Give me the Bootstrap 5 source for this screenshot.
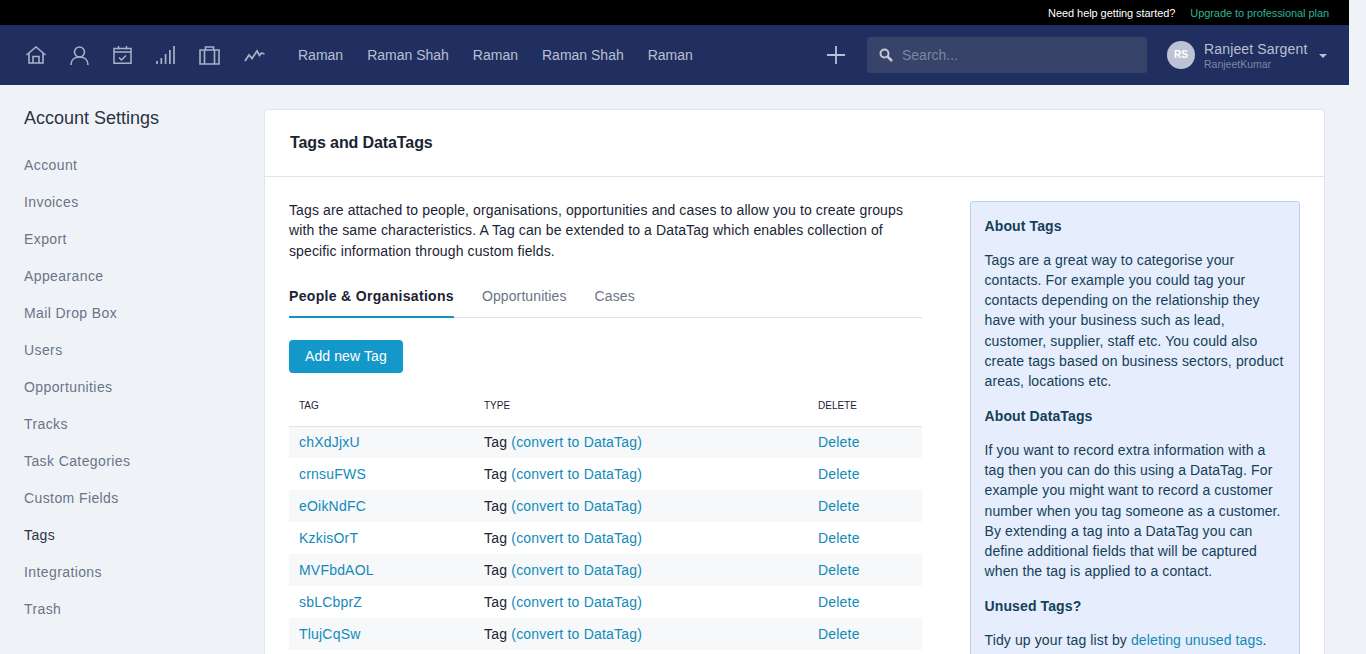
<!DOCTYPE html>
<html lang="en">
<head>
    <meta charset="UTF-8">
    <meta name="viewport" content="width=device-width, initial-scale=1.0">
    <title>Tags and DataTags</title>
    <link href="https://cdn.jsdelivr.net/npm/bootstrap@5.3.0/dist/css/bootstrap.min.css" rel="stylesheet">
    <style>
        html, body { height: 654px; overflow: hidden; }
        body {
            font-family: "Liberation Sans", Arial, sans-serif;
            font-size: 14px;
            line-height: 20px;
            background-color: #eff3f8;
            color: #1a2433;
        }
        a { color: #118ab8; text-decoration: none; }
        .page-wrap { width: 1349px; }

        .help-bar {
            height: 25px;
            background: #000;
            font-size: 11px;
            letter-spacing: -.07px;
            padding-right: 20px;
            gap: 15px;
        }
        .help-bar a { color: #fff; }
        .help-bar a.upgrade { color: #2bb592; }

        .main-bar { height: 60px; background: #202f5f; padding-left: 26px; }
        .bar-icons { gap: 24px; width: 272px; }
        .bar-icons svg { display: block; }
        .bar-links { gap: 24px; width: 528px; }
        .bar-links a { color: #b9c0d2; font-size: 14px; }
        .plus-btn { width: 20px; height: 20px; margin-right: 21px; }
        .search-box {
            width: 280px;
            height: 36px;
            background: #384369;
            border-radius: 3px;
            padding-left: 12px;
            gap: 7px;
            color: #7c86a3;
        }
        .search-box input {
            background: transparent;
            border: 0;
            outline: 0;
            width: 220px;
            font-size: 14px;
            color: #fff;
        }
        .search-box input::placeholder { color: #7c86a3; opacity: 1; }
        .user-menu { margin-left: 20px; }
        .user-avatar {
            width: 28px;
            height: 28px;
            border-radius: 50%;
            background: #bdc3d5;
            color: #fff;
            font-size: 10px;
            font-weight: 700;
            margin-right: 9px;
        }
        .user-name { color: #b9c0d2; font-size: 14px; line-height: 16px; letter-spacing: .15px; }
        .user-login { color: #7c86a3; font-size: 10.5px; line-height: 12px; margin-top: 1px; }
        .user-caret {
            width: 0;
            height: 0;
            border-left: 4px solid transparent;
            border-right: 4px solid transparent;
            border-top: 4px solid #b9c0d2;
            margin-left: 12px;
            margin-top: 1px;
        }

        .content-wrap { padding: 24px 24px 0 24px; gap: 0; }
        .side-col { width: 240px; flex: none; }
        .side-title { font-size: 18px; line-height: 24px; font-weight: 400; color: #2a3344; margin: -3px 0 17px; }
        .side-col a { display: block; color: #6b7486; height: 37px; line-height: 37px; letter-spacing: .4px; }
        .side-col a.on { color: #2a3344; }

        .tags-panel {
            width: 1061px;
            flex: none;
            background: #fff;
            border: 1px solid #e1e5ee;
            border-radius: 4px;
        }
        .tags-head { height: 67px; padding: 0 25px; border-bottom: 1px solid #e1e5ee; }
        .tags-head h1 { font-size: 16px; font-weight: 700; margin: 0; color: #1a2433; letter-spacing: -.1px; }
        .tags-body { padding: 23px 24px 0; gap: 48px; }
        .tags-main { width: 633px; flex: none; }
        .tags-intro { margin: 0 0 16.8px; font-size: 14px; line-height: 20.4px; color: #1a2433; letter-spacing: .12px; }
        .tag-tabs { gap: 28px; border-bottom: 1px solid #dfe3ea; height: 40px; }
        .tag-tabs a { color: #6b7486; line-height: 20px; padding: 8px 0 0; height: 40px; letter-spacing: .1px; }
        .tag-tabs a.on { color: #1a2433; font-weight: 700; border-bottom: 2px solid #1392c4; letter-spacing: .32px; }
        .add-btn {
            background: #1497c9;
            border: 0;
            color: #fff;
            font-size: 14px;
            letter-spacing: .1px;
            height: 33px;
            padding: 0 16px;
            border-radius: 4px;
            margin: 22px 0 14px;
        }
        .add-btn:hover { background: #1392c4; color: #fff; }
        .tag-table { width: 633px; border-collapse: collapse; table-layout: fixed; letter-spacing: .2px; }
        .tag-table .col-tag { width: 185px; }
        .tag-table .col-type { width: 334px; }
        .tag-table th {
            font-size: 10px;
            font-weight: 400;
            letter-spacing: 0;
            height: 39px;
            padding: 0 10px;
            border-bottom: 1px solid #dfe3ea;
            color: #1a2433;
            vertical-align: middle;
        }
        .tag-table td { height: 32px; padding: 0 10px; }
        .tag-table tbody tr:nth-child(odd) td { background: #f7f8fa; }

        .about-box {
            width: 330px;
            flex: none;
            margin-top: 1px;
            background: #e6edfd;
            border: 1px solid #bdd0f4;
            border-radius: 3px;
            padding: 14px 14px 0 13.500px;
            color: #143f57;
            height: 600px;
            letter-spacing: .12px;
        }
        .about-box h2 { font-size: 14px; line-height: 20px; font-weight: 700; margin: 0 0 14px; }
        .about-box p { margin: 0 0 15px; line-height: 20.15px; }
    </style>
</head>
<body>
<div class="page-wrap">

    <!-- Help bar -->
    <div class="help-bar d-flex align-items-center justify-content-end">
        <a href="#">Need help getting started?</a>
        <a href="#" class="upgrade">Upgrade to professional plan</a>
    </div>

    <!-- Main bar -->
    <nav class="main-bar d-flex align-items-center">
        <div class="bar-icons d-flex align-items-center">
            <svg width="20" height="18" viewBox="0 0 20 18" fill="none" stroke="#a9b1c8" stroke-width="1.6">
                <path d="M.5 9 10 1 19.500 9M3 7V17H17V7M7 17V10.500H13V17"/>
            </svg>
            <svg width="19" height="19" viewBox="0 0 19 19" fill="none" stroke="#a9b1c8" stroke-width="1.6">
                <circle cx="9.500" cy="6" r="5"/>
                <path d="M1 19C1 14 4.500 11 9.500 11S18 14 18 19"/>
            </svg>
            <svg width="19" height="18" viewBox="0 0 19 18" fill="none" stroke="#a9b1c8" stroke-width="1.500">
                <path d="M1 2.500H18V17.200H1ZM1 6H18M5.500 0V3.500M13.500 0V3.500"/>
                <path d="M6 11.500 8.500 14 13 9.500"/>
            </svg>
            <svg width="19" height="18" viewBox="0 0 19 18" fill="none" stroke="#a9b1c8" stroke-width="1.700">
                <path d="M1 18V15M5.300 18V12M9.600 18V8M13.900 18V4M18 18V0"/>
            </svg>
            <svg width="21" height="19" viewBox="0 0 21 19" fill="none" stroke="#a9b1c8" stroke-width="1.600">
                <path d="M1 4H20V18H1ZM5.500 4V18M15.500 4V18M6.500 4V1H14.500V4"/>
            </svg>
            <svg width="21" height="13" viewBox="0 0 21 13" fill="none" stroke="#a9b1c8" stroke-width="1.800">
                <path d="M1 12 5 6 8 9.500 13 2 15.500 6.500 17.500 4 20.500 5"/>
            </svg>
        </div>
        <div class="bar-links d-flex align-items-center">
            <a href="#">Raman</a>
            <a href="#">Raman Shah</a>
            <a href="#">Raman</a>
            <a href="#">Raman Shah</a>
            <a href="#">Raman</a>
        </div>
        <svg class="plus-btn" viewBox="0 0 20 20" fill="none" stroke="#b9c0d2" stroke-width="1.800">
            <path d="M10 1V19M1 10H19"/>
        </svg>
        <div class="search-box d-flex align-items-center">
            <svg width="14" height="14" viewBox="0 0 14 14" fill="none" stroke="#c3c9d9">
                <circle cx="5.500" cy="5.500" r="4" stroke-width="2"/>
                <path d="M8.500 8.500 13 13" stroke-width="2.500"/>
            </svg>
            <input type="text" placeholder="Search...">
        </div>
        <div class="user-menu d-flex align-items-center">
            <div class="user-avatar d-flex align-items-center justify-content-center">RS</div>
            <div>
                <div class="user-name">Ranjeet Sargent</div>
                <div class="user-login">RanjeetKumar</div>
            </div>
            <div class="user-caret"></div>
        </div>
    </nav>

    <div class="content-wrap d-flex align-items-start">

        <!-- Sidebar -->
        <div class="side-col">
            <h2 class="side-title">Account Settings</h2>
            <a href="#">Account</a>
            <a href="#">Invoices</a>
            <a href="#">Export</a>
            <a href="#">Appearance</a>
            <a href="#">Mail Drop Box</a>
            <a href="#">Users</a>
            <a href="#">Opportunities</a>
            <a href="#">Tracks</a>
            <a href="#">Task Categories</a>
            <a href="#">Custom Fields</a>
            <a href="#" class="on">Tags</a>
            <a href="#">Integrations</a>
            <a href="#">Trash</a>
        </div>

        <!-- Tags panel -->
        <div class="tags-panel">
            <div class="tags-head d-flex align-items-center">
                <h1>Tags and DataTags</h1>
            </div>
            <div class="tags-body d-flex align-items-start">
                <div class="tags-main">
                    <p class="tags-intro">Tags are attached to people, organisations, opportunities and cases to allow you to create groups with the same characteristics. A Tag can be extended to a DataTag which enables collection of specific information through custom fields.</p>
                    <div class="tag-tabs d-flex">
                        <a href="#" class="on">People &amp; Organisations</a>
                        <a href="#">Opportunities</a>
                        <a href="#">Cases</a>
                    </div>
                    <button class="btn add-btn" type="button">Add new Tag</button>
                    <table class="tag-table">
                        <thead>
                            <tr><th class="col-tag">TAG</th><th class="col-type">TYPE</th><th>DELETE</th></tr>
                        </thead>
                        <tbody>
                            <tr><td><a href="#">chXdJjxU</a></td><td>Tag <a href="#">(convert to DataTag)</a></td><td><a href="#">Delete</a></td></tr>
                            <tr><td><a href="#">crnsuFWS</a></td><td>Tag <a href="#">(convert to DataTag)</a></td><td><a href="#">Delete</a></td></tr>
                            <tr><td><a href="#">eOikNdFC</a></td><td>Tag <a href="#">(convert to DataTag)</a></td><td><a href="#">Delete</a></td></tr>
                            <tr><td><a href="#">KzkisOrT</a></td><td>Tag <a href="#">(convert to DataTag)</a></td><td><a href="#">Delete</a></td></tr>
                            <tr><td><a href="#">MVFbdAOL</a></td><td>Tag <a href="#">(convert to DataTag)</a></td><td><a href="#">Delete</a></td></tr>
                            <tr><td><a href="#">sbLCbprZ</a></td><td>Tag <a href="#">(convert to DataTag)</a></td><td><a href="#">Delete</a></td></tr>
                            <tr><td><a href="#">TlujCqSw</a></td><td>Tag <a href="#">(convert to DataTag)</a></td><td><a href="#">Delete</a></td></tr>
                        </tbody>
                    </table>
                </div>

                <div class="about-box">
                    <h2>About Tags</h2>
                    <p>Tags are a great way to categorise your contacts. For example you could tag your contacts depending on the relationship they have with your business such as lead, customer, supplier, staff etc. You could also create tags based on business sectors, product areas, locations etc.</p>
                    <h2>About DataTags</h2>
                    <p>If you want to record extra information with a tag then you can do this using a DataTag. For example you might want to record a customer number when you tag someone as a customer. By extending a tag into a DataTag you can define additional fields that will be captured when the tag is applied to a contact.</p>
                    <h2>Unused Tags?</h2>
                    <p>Tidy up your tag list by <a href="#">deleting unused tags</a>.</p>
                </div>
            </div>
        </div>
    </div>
</div>
<script src="https://cdn.jsdelivr.net/npm/bootstrap@5.3.0/dist/js/bootstrap.bundle.min.js"></script>
</body>
</html>
